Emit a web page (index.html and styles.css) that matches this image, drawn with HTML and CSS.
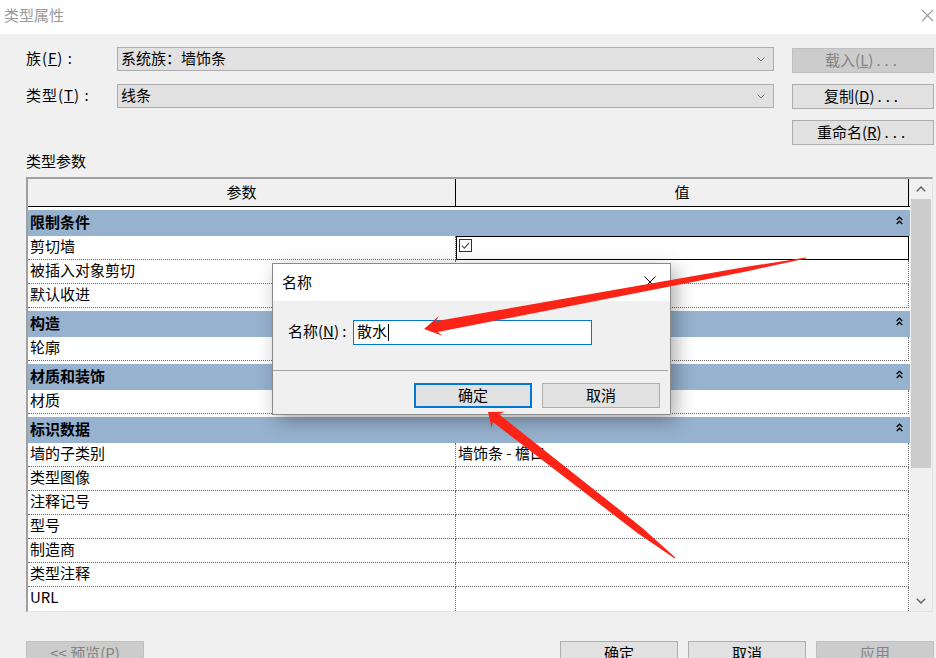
FILE: index.html
```html
<!DOCTYPE html>
<html lang="zh-CN">
<head>
<meta charset="utf-8">
<title>类型属性</title>
<link rel="stylesheet" href="styles.css">
</head>
<body>
<div class="window">
  <header class="titlebar">
    <span class="title">类型属性</span>
    <svg class="win-close" width="13" height="13" viewBox="0 0 13 13"><path d="M1 1L12 12M12 1L1 12" stroke="#9a9a9a" stroke-width="1.1" fill="none"/></svg>
  </header>
  <main class="main">
    <div class="top">
      <div class="fields">
        <div class="field">
          <span class="field-label">族(<u>F</u>)&nbsp;:</span>
          <div class="select"><span class="select-text">系统族：墙饰条</span><svg width="8" height="5" viewBox="0 0 8 5"><path d="M0.5 0.5L4 4L7.5 0.5" stroke="#707070" fill="none"/></svg></div>
        </div>
        <div class="field">
          <span class="field-label">类型(<u>T</u>)&nbsp;:</span>
          <div class="select"><span class="select-text">线条</span><svg width="8" height="5" viewBox="0 0 8 5"><path d="M0.5 0.5L4 4L7.5 0.5" stroke="#707070" fill="none"/></svg></div>
        </div>
      </div>
      <div class="actions">
        <button class="btn disabled">载入(<u>L</u>)<span class="dots">...</span></button>
        <button class="btn">复制(<u>D</u>)<span class="dots">...</span></button>
        <button class="btn">重命名(<u>R</u>)<span class="dots">...</span></button>
      </div>
    </div>
    <div class="section-label">类型参数</div>
    <div class="grid">
      <div class="table">
        <div class="thead"><div class="th c1">参数</div><div class="th c2">值</div></div>

        <div class="band"><span>限制条件</span><svg class="collapse" width="7" height="9" viewBox="0 0 7 9"><path d="M0.7 4L3.5 1.2L6.3 4M0.7 8L3.5 5.2L6.3 8" stroke="#000" stroke-width="1.3" fill="none"/></svg></div>
        <div class="row"><div class="cell c1">剪切墙</div><div class="cell c2 selected"><svg class="checkbox" width="13" height="13" viewBox="0 0 13 13"><rect x="0.5" y="0.5" width="12" height="12" fill="#fff" stroke="#333"/><path d="M3 6.8L5.3 9.2L10 4" stroke="#555" stroke-width="1.2" fill="none"/></svg></div></div>
        <div class="row"><div class="cell c1">被插入对象剪切</div><div class="cell c2"></div></div>
        <div class="row"><div class="cell c1">默认收进</div><div class="cell c2"></div></div>

        <div class="band"><span>构造</span><svg class="collapse" width="7" height="9" viewBox="0 0 7 9"><path d="M0.7 4L3.5 1.2L6.3 4M0.7 8L3.5 5.2L6.3 8" stroke="#000" stroke-width="1.3" fill="none"/></svg></div>
        <div class="row"><div class="cell c1">轮廓</div><div class="cell c2"></div></div>

        <div class="band"><span>材质和装饰</span><svg class="collapse" width="7" height="9" viewBox="0 0 7 9"><path d="M0.7 4L3.5 1.2L6.3 4M0.7 8L3.5 5.2L6.3 8" stroke="#000" stroke-width="1.3" fill="none"/></svg></div>
        <div class="row"><div class="cell c1">材质</div><div class="cell c2"></div></div>

        <div class="band"><span>标识数据</span><svg class="collapse" width="7" height="9" viewBox="0 0 7 9"><path d="M0.7 4L3.5 1.2L6.3 4M0.7 8L3.5 5.2L6.3 8" stroke="#000" stroke-width="1.3" fill="none"/></svg></div>
        <div class="row"><div class="cell c1">墙的子类别</div><div class="cell c2">墙饰条 - 檐口</div></div>
        <div class="row"><div class="cell c1">类型图像</div><div class="cell c2"></div></div>
        <div class="row"><div class="cell c1">注释记号</div><div class="cell c2"></div></div>
        <div class="row"><div class="cell c1">型号</div><div class="cell c2"></div></div>
        <div class="row"><div class="cell c1">制造商</div><div class="cell c2"></div></div>
        <div class="row"><div class="cell c1">类型注释</div><div class="cell c2"></div></div>
        <div class="row last"><div class="cell c1">URL</div><div class="cell c2"></div></div>
      </div>
      <div class="scrollbar">
        <div class="sb-btn"><svg width="10" height="6" viewBox="0 0 10 6"><path d="M0.8 5.2L5 1L9.2 5.2" stroke="#606060" stroke-width="1.4" fill="none"/></svg></div>
        <div class="sb-thumb"></div>
        <div class="sb-track"></div>
        <div class="sb-btn"><svg width="10" height="6" viewBox="0 0 10 6"><path d="M0.8 0.8L5 5L9.2 0.8" stroke="#606060" stroke-width="1.4" fill="none"/></svg></div>
      </div>
    </div>
    <div class="footer">
      <button class="btn disabled">&lt;&lt; 预览(<u>P</u>)</button>
      <div class="footer-right">
        <button class="btn">确定</button>
        <button class="btn">取消</button>
        <button class="btn disabled">应用</button>
      </div>
    </div>
  </main>

  <div class="dialog">
    <div class="dlg-title">
      <span>名称</span>
      <svg width="12" height="12" viewBox="0 0 12 12"><path d="M0.5 0.5L11.5 11.5M11.5 0.5L0.5 11.5" stroke="#000" stroke-width="1" fill="none"/></svg>
    </div>
    <div class="dlg-body">
      <div class="dlg-row">
        <span class="dlg-label">名称(<u>N</u>)&nbsp;:</span>
        <div class="dlg-input"><span class="dlg-value">散水</span><span class="caret"></span></div>
      </div>
      <div class="dlg-sep"></div>
      <div class="dlg-actions">
        <button class="btn default">确定</button>
        <button class="btn">取消</button>
      </div>
    </div>
  </div>

  <svg class="marks" width="936" height="658" viewBox="0 0 936 658">
    <polygon fill="#fb2417" points="424,329 438.9,316.1 435.8,321.2 746.6,266.8 805.9,257.5 806.1,258.5 747.4,271.2 437.8,332 442.5,335.7"/>
    <polygon fill="#fb2417" points="488,412 504.7,411.7 499,414.3 641.8,527.4 675.3,557.6 674.7,558.4 637.4,533 492.8,422.1 491.7,428.3"/>
  </svg>
</div>
</body>
</html>
```

FILE: styles.css
```css
* { box-sizing: border-box; }
html, body { margin: 0; padding: 0; }
body {
  width: 936px;
  height: 658px;
  overflow: hidden;
  background: #f0f0f0;
  font-family: "Noto Sans CJK SC", "Liberation Sans", sans-serif;
  font-size: 15px;
  color: #000;
}
.window { position: relative; width: 936px; height: 658px; overflow: hidden; }

.titlebar {
  height: 34px;
  background: #fff;
  display: flex;
  align-items: center;
  justify-content: space-between;
  padding: 0 2px 4px 4px;
}
.title { color: #9a9a9a; line-height: 20px; }

.main { padding: 13px 2px 0 26px; }
.top { display: flex; gap: 18px; }
.fields { width: 748px; display: flex; flex-direction: column; gap: 13px; }
.field { display: flex; align-items: center; height: 24px; }
.field-label { width: 91px; line-height: 20px; letter-spacing: 1px; padding-bottom: 3px; }
.select {
  width: 657px;
  height: 24px;
  background: #e1e1e1;
  border: 1px solid #adadad;
  display: flex;
  align-items: center;
  justify-content: space-between;
  padding: 0 8px 0 3px;
}
.select-text { line-height: 20px; padding-bottom: 3px; }
.actions { width: 142px; display: flex; flex-direction: column; gap: 11px; padding-top: 1px; }
.btn {
  height: 25px;
  border: 1px solid #adadad;
  background: #e1e1e1;
  font: inherit;
  color: #000;
  padding: 0 0 2px 0;
  line-height: 20px;
  text-align: center;
}
.btn.disabled { background: #cccccc; border-color: #bfbfbf; color: #838383; }
.dots { letter-spacing: 4px; margin-left: 3px; }

.section-label { margin-top: 6px; line-height: 20px; padding-bottom: 2px; margin-bottom: -2px; }

.grid {
  margin-top: 6px;
  width: 907px;
  display: flex;
  background: #fff;
  border-top: 2px solid #a0a0a0;
  border-left: 2px solid #a0a0a0;
  border-right: 1px solid #e3e3e3;
  border-bottom: 1px solid #e3e3e3;
}
.table { width: 882px; background: #fff; }
.thead { display: flex; height: 28px; background: #f0f0f0; border-bottom: 1px solid #000; }
.th { line-height: 26px; text-align: center; border-right: 1px solid #000; }
.c1 { width: 428px; }
.c2 { width: 453px; }

.band {
  margin-top: 3px;
  height: 26px;
  background: #97b2cf;
  font-weight: bold;
  display: flex;
  align-items: center;
  justify-content: space-between;
  padding: 0 7px 2px 2px;
  line-height: 20px;
}
.collapse { margin-top: -4px; }
.row { display: flex; height: 24px; }
.cell {
  height: 24px;
  border-right: 1px dotted #6a6a6a;
  border-bottom: 1px dotted #6a6a6a;
  padding-left: 2px;
  line-height: 20px;
  white-space: nowrap;
}
.row.last .cell { border-bottom: none; }
.cell.selected { border: 1px solid #000; padding: 2px 0 0 2px; }
.checkbox { display: block; }

.scrollbar { width: 22px; background: #f0f0f0; display: flex; flex-direction: column; }
.sb-btn { height: 20px; display: flex; align-items: center; justify-content: center; }
.sb-thumb { height: 269px; margin: 0 1px; background: #cdcdcd; }
.sb-track { flex: 1; }

.footer { margin-top: 29px; display: flex; justify-content: space-between; }
.footer .btn { width: 118px; }
.footer-right { display: flex; gap: 10px; }

.dialog {
  position: absolute;
  left: 272px;
  top: 263px;
  width: 399px;
  height: 152px;
  background: #f0f0f0;
  border: 1px solid #8a8a8a;
  box-shadow: 5px 6px 18px rgba(0, 0, 0, 0.33);
}
.dlg-title {
  height: 37px;
  background: #fff;
  display: flex;
  align-items: center;
  justify-content: space-between;
  padding: 0 14px 2px 9px;
  line-height: 20px;
}
.dlg-body { padding-top: 19px; }
.dlg-row { display: flex; align-items: center; padding-left: 15px; }
.dlg-label { width: 65px; line-height: 20px; padding-bottom: 3px; }
.dlg-input {
  width: 239px;
  height: 25px;
  border: 1px solid #0078d7;
  background: #fff;
  padding-left: 3px;
  display: flex;
  align-items: center;
}
.dlg-value { line-height: 20px; padding-bottom: 3px; }
.caret { width: 1px; height: 17px; background: #000; margin-left: 1px; }
.dlg-sep { margin-top: 25px; border-top: 1px solid #a0a0a0; margin-right: 2px; }
.dlg-actions { display: flex; justify-content: flex-end; gap: 10px; padding: 12px 10px 0 0; }
.dlg-actions .btn { width: 118px; }
.btn.default { border: 2px solid #0078d7; line-height: 18px; }

.marks { position: absolute; left: 0; top: 0; pointer-events: none; }
```
